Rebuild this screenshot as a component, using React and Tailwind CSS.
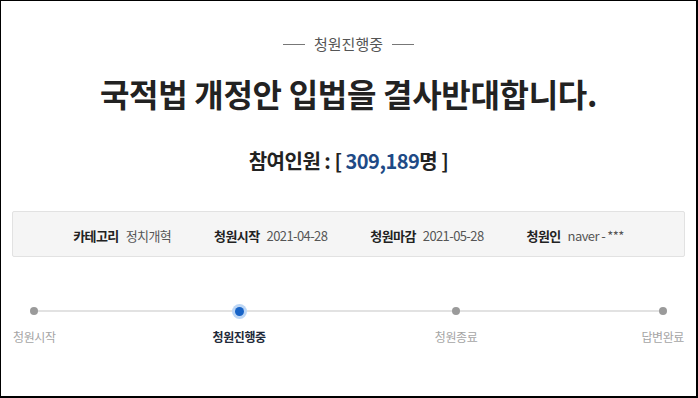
import React from "react";

const font = { fontFamily: '"Noto Sans CJK KR", "Noto Sans", sans-serif' };

function Step({ label, active, className }) {
  return (
    <div className={"flex flex-col items-center relative " + (className || "")}>
      <div className="h-[16px] flex items-center justify-center">
        {active ? (
          <div className="w-[15px] h-[15px] rounded-full bg-[#bcd6f5] flex items-center justify-center">
            <div className="w-[9px] h-[9px] rounded-full bg-[#1763c7]" />
          </div>
        ) : (
          <div className="w-[8px] h-[8px] rounded-full bg-[#9a9a9a]" />
        )}
      </div>
      <div
        className={
          "mt-[9px] text-[12px] leading-[18px] tracking-[-0.4px] " +
          (active ? "font-bold text-[#1f2a3a]" : "text-[#a5a5a5]")
        }
      >
        {label}
      </div>
    </div>
  );
}

export default function App() {
  return (
    <div
      className="w-[698px] h-[398px] bg-white border-black border-t border-l border-r-2 border-b-2 flex flex-col items-center overflow-hidden"
      style={font}
    >
      <div className="mt-[32px] flex items-center gap-[9px] text-[#555] text-[15px] leading-[22px]">
        <div className="w-[22px] h-px bg-[#777]" />
        <span>청원진행중</span>
        <div className="w-[22px] h-px bg-[#777]" />
      </div>
      <div className="mt-[18px] text-[32px] leading-[40px] font-bold text-[#222] tracking-[-0.3px]">
        국적법 개정안 입법을 결사반대합니다.
      </div>
      <div className="mt-[34px] text-[20px] leading-[28px] font-bold text-[#222] tracking-[-0.5px]">
        참여인원 : [ <span className="text-[#1e4a86] font-semibold">309,189</span>명 ]
      </div>
      <div className="mt-[36px] self-stretch mx-[11px] h-[46px] bg-[#f5f5f5] border border-[#e2e2e2] rounded-[2px] flex items-center justify-center gap-[43px] text-[13px] leading-[18px] text-[#333] tracking-[-0.6px] pt-[3px]">
        <div className="flex gap-[7px]">
          <span className="font-bold text-[#222]">카테고리</span>
          <span className="text-[#555]">정치개혁</span>
        </div>
        <div className="flex gap-[7px]">
          <span className="font-bold text-[#222]">청원시작</span>
          <span className="text-[#555]">2021-04-28</span>
        </div>
        <div className="flex gap-[7px]">
          <span className="font-bold text-[#222]">청원마감</span>
          <span className="text-[#555]">2021-05-28</span>
        </div>
        <div className="flex gap-[7px]">
          <span className="font-bold text-[#222]">청원인</span>
          <span className="text-[#555]">naver - ***</span>
        </div>
      </div>
      <div className="relative self-stretch mx-[12px] mt-[46px] flex">
        <div className="absolute left-[22px] right-[23px] top-[7px] h-[2px] bg-[#e2e2e2]" />
        <Step label="청원시작" />
        <Step label="청원진행중" active className="ml-[157px]" />
        <Step label="청원종료" className="ml-[169px]" />
        <Step label="답변완료" className="ml-auto" />
      </div>
    </div>
  );
}
